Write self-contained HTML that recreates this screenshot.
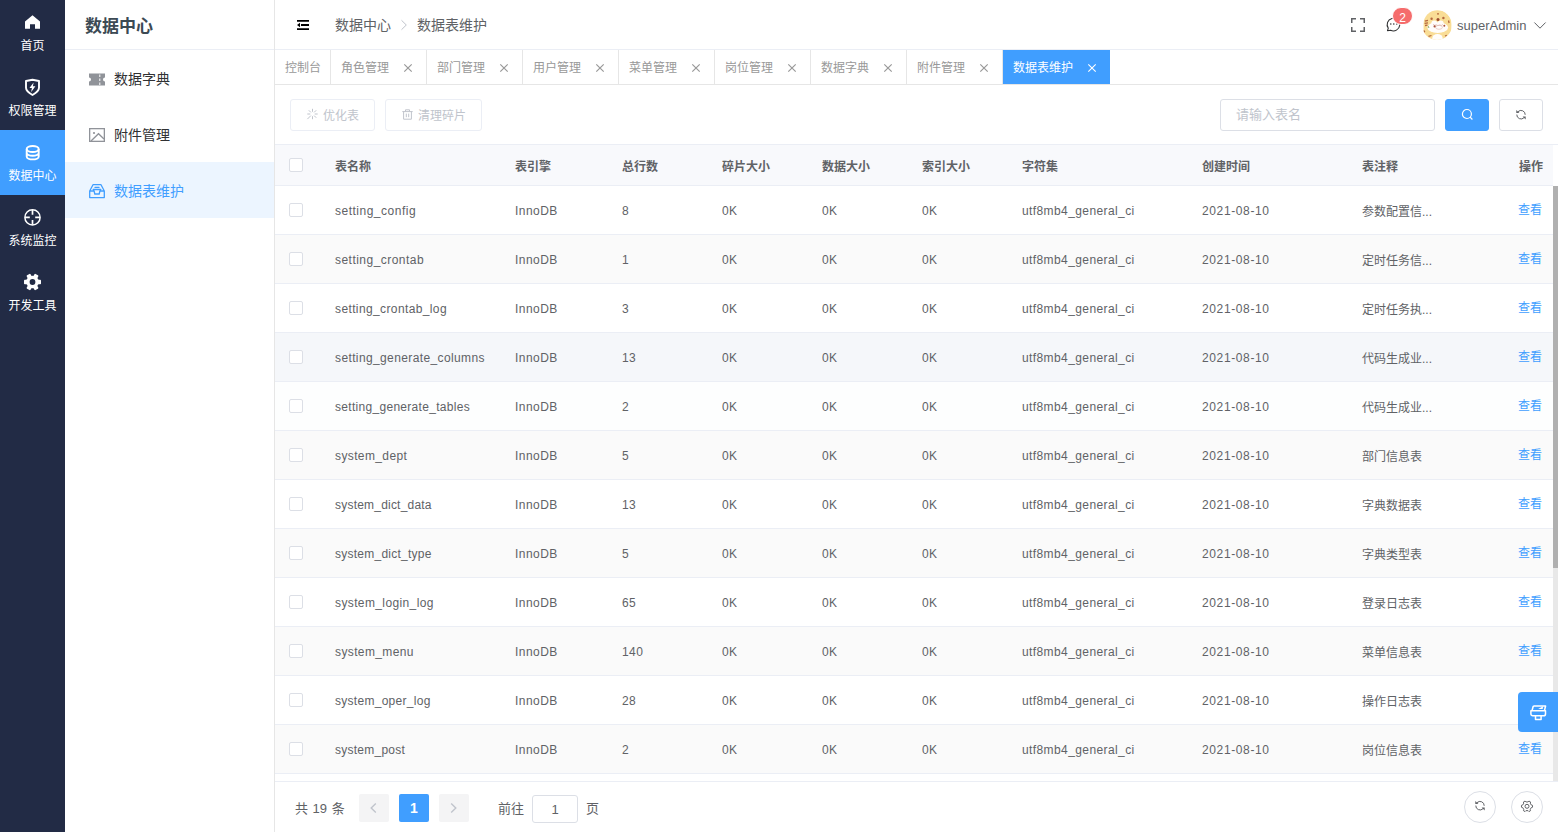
<!DOCTYPE html>
<html lang="zh-CN">
<head>
<meta charset="utf-8">
<title>数据表维护</title>
<style>
*{box-sizing:border-box;margin:0;padding:0}
html,body{width:1558px;height:832px;overflow:hidden;background:#fff}
body{font-family:"Liberation Sans","Noto Sans CJK SC",sans-serif;font-size:12px;color:#606266;position:relative}
ul{list-style:none}
svg{display:block;overflow:visible}
i{font-style:normal}
/* split sidebar */
.split{position:absolute;left:0;top:0;width:65px;height:832px;background:#222b45}
.split li{width:65px;height:65px;color:#fff;text-align:center;position:relative}
.split li.on{background:#409eff}
.split li svg{position:absolute;left:23px;top:13px;width:19px;height:19px}
.split li p{position:absolute;left:0;width:65px;top:36px;line-height:20px;font-size:12px}
/* side */
.side{position:absolute;left:65px;top:0;width:210px;height:832px;border-right:1px solid #e6e6e6;background:#fff}
.side .top{height:50px;line-height:54px;border-bottom:1px solid #ebeef5;padding:0 20px;font-size:17px;font-weight:bold;color:#3c4a54;overflow:hidden}
.side li{height:56px;line-height:58px;padding-left:20px;font-size:14px;color:#303133;position:relative}
.side li.on{background:#ecf5ff;color:#409eff}
.side li svg{position:absolute;left:24px;top:22px;width:16px;height:16px}
.side li span{position:absolute;left:49px;top:0}
/* topbar */
.topbar{position:absolute;left:275px;top:0;width:1283px;height:50px;border-bottom:1px solid #ebeef5;background:#fff}
.topbar span{position:absolute;top:0;line-height:51px;font-size:14px;color:#606266;white-space:nowrap}
.topbar svg{position:absolute}
.badge{position:absolute;left:1117px;top:7px;width:21px;height:18px;border:1px solid #fff;border-radius:9px;background:#f56c6c;color:#fff;font-size:12px;line-height:20px;text-align:center}
/* tags */
.tags{position:absolute;left:275px;top:50px;width:1283px;height:35px;border-bottom:1px solid #e6e6e6;background:#fff}
.tags li{float:left;width:96px;height:34px;border-right:1px solid #e6e6e6;line-height:37px;font-size:12px;color:#999;position:relative;padding-left:10px;white-space:nowrap}
.tags li.on{background:#409eff;color:#fff;border-right-color:#409eff;width:107px}
.tags li svg{position:absolute;right:14px;top:14px;width:8px;height:8px}
.tags li.on svg{right:13px}
/* main */
.main{position:absolute;left:275px;top:85px;width:1283px;height:747px;background:#fff}
.bar{position:absolute;left:0;top:0;width:1283px;height:60px;border-bottom:1px solid #ebeef5}
.btn{position:absolute;top:14px;height:32px;border:1px solid #ebeef5;border-radius:3px;background:#fff;color:#c0c4cc;font-size:12px;line-height:32px;white-space:nowrap}
.btn svg{position:absolute}
.btn span{position:absolute;top:0}
.inp{position:absolute;left:945px;top:14px;width:215px;height:32px;border:1px solid #dcdfe6;border-radius:3px;line-height:30px;padding-left:15px;color:#c0c4cc;font-size:13px}
.tbl{position:absolute;left:0;top:60px;width:1283px;height:636px;overflow:hidden}
.th{position:absolute;left:0;top:0;width:1278px;height:41px;background:#f8f9fc;border-bottom:1px solid #ebeef5;font-weight:bold;color:#606266;line-height:44px}
.tr{position:absolute;left:0;width:1278px;height:49px;border-bottom:1px solid #ebeef5;line-height:50px;background:#fff}
.tr.s{background:#fafafa}
.tr span,.th span{position:absolute;top:0;white-space:nowrap}
.ck{position:absolute;left:14px;top:17px;width:14px;height:14px;border:1px solid #dcdfe6;border-radius:2px;background:#fff}
.th .ck{top:13px}
.c1{left:60px;letter-spacing:.38px}.c2{left:240px;letter-spacing:.45px}.c3{left:347px;letter-spacing:.4px}.c4{left:447px;letter-spacing:.4px}.c5{left:547px;letter-spacing:.4px}.c6{left:647px;letter-spacing:.4px}.c7{left:747px;letter-spacing:.4px}.c8{left:927px;letter-spacing:.62px}.c9{left:1087px}.c10{left:1243px;color:#409eff}
.tr .c9{line-height:52px}
.tr .c10{line-height:49px}
.th span{letter-spacing:0}
.th .c10{left:1244px;color:#606266}
.sb{position:absolute;left:1278px;top:41px;width:5px;height:595px;background:#e8e8e8}
.sb i{position:absolute;left:0;top:0;width:5px;height:382px;background:#b0b0b0}
.foot{position:absolute;left:0;top:696px;width:1283px;height:51px;border-top:1px solid #ebeef5;background:#fff;font-size:13px;color:#606266}
.foot .t{position:absolute;top:12px;line-height:30px;white-space:nowrap}
.pb{position:absolute;top:12px;width:30px;height:28px;border-radius:2px;background:#f4f4f5;color:#c0c4cc;text-align:center;line-height:28px;font-weight:bold}
.pb svg{position:absolute;left:11px;top:9px;width:7px;height:10px}
.pb.on{background:#409eff;color:#fff;font-size:14px}
.pi{position:absolute;left:257px;top:13px;width:46px;height:28px;border:1px solid #dcdfe6;border-radius:3px;text-align:center;line-height:27px;color:#606266}
.cb{position:absolute;top:9px;width:32px;height:32px;border:1px solid #dcdfe6;border-radius:50%;background:#fff}
.cb svg{position:absolute;left:9px;top:8px;width:12px;height:12px}
.fl{position:absolute;left:1243px;top:607px;width:40px;height:40px;background:#409eff;border-radius:4px 0 0 4px}
.fl svg{position:absolute;left:12px;top:13px;width:16px;height:16px}
</style>
</head>
<body>
<div class="split">
<ul>
<li><svg viewBox="0 0 19 19"><path d="M9.500 2.300 2 8.600v7.200h5v-4.500h5v4.500h5V8.600z" fill="#fff"/></svg><p>首页</p></li>
<li><svg viewBox="0 0 19 19"><path d="M9.500 1.800 3 3v6.800c0 2.600 2.400 4.900 6.500 7.200 4.100-2.300 6.500-4.600 6.500-7.200V3z" fill="none" stroke="#fff" stroke-width="1.900" stroke-linejoin="round"/><path d="M10.600 4.400 6.500 10h2.400l-.8 4.200 4.300-5.900H9.900z" fill="#fff"/></svg><p>权限管理</p></li>
<li class="on"><svg viewBox="0 0 19 19"><ellipse cx="9.700" cy="6" rx="6" ry="3" fill="none" stroke="#fff" stroke-width="1.900"/><path d="M3.700 6v7.400c0 1.700 2.700 3 6 3s6-1.300 6-3V6M3.700 9.700c0 1.700 2.700 3 6 3s6-1.300 6-3" fill="none" stroke="#fff" stroke-width="1.900"/></svg><p>数据中心</p></li>
<li><svg viewBox="0 0 19 19"><circle cx="9.500" cy="9.400" r="7.600" fill="none" stroke="#fff" stroke-width="1.500"/><path d="M9.500 2v4.800M9.500 12v4.800M2 9.400h4.800M12.200 9.400H17" stroke="#fff" stroke-width="1.700"/></svg><p>系统监控</p></li>
<li><svg viewBox="0 0 19 19"><g transform="translate(9.500 9)" fill="#fff"><circle r="6.300"/><rect x="-8.500" y="-2.200" width="17" height="4.400" rx=".8"/><rect x="-8.500" y="-2.200" width="17" height="4.400" rx=".8" transform="rotate(60)"/><rect x="-8.500" y="-2.200" width="17" height="4.400" rx=".8" transform="rotate(120)"/><circle r="2.900" fill="#222b45"/></g></svg><p>开发工具</p></li>
</ul>
</div>
<div class="side">
<div class="top">数据中心</div>
<ul>
<li><svg viewBox="0 0 16 16"><path d="M0 1.500h16v4a2 2 0 0 0 0 4v4H0v-4a2 2 0 0 0 0-4z" fill="#909399"/><path d="M10.800 1.500v12" stroke="#fff" stroke-width="1" stroke-dasharray="2.500 1.500" stroke-dashoffset="-1"/></svg><span>数据字典</span></li>
<li><svg viewBox="0 0 16 16"><rect x=".65" y=".65" width="14.700" height="12.700" fill="none" stroke="#909399" stroke-width="1.300"/><path d="M2 13 9.500 5.700 15 11" fill="none" stroke="#909399" stroke-width="1.300"/><circle cx="5" cy="5" r="1.100" fill="#909399"/></svg><span>附件管理</span></li>
<li class="on"><svg viewBox="0 0 16 16"><path d="M.7 7 4 .7h8L15.300 7v6.600H.7zM.7 7h4.400l.7 3h4.400l.7-3h4.400M6 3.400h4M4.200 5.500h7.600" fill="none" stroke="#409eff" stroke-width="1.300" stroke-linejoin="round" stroke-linecap="round"/></svg><span>数据表维护</span></li>
</ul>
</div>
<div class="topbar">
<svg style="left:22px;top:20px;width:12px;height:10px" viewBox="0 0 12 10"><path d="M0 0h12v1.800H0zM4 4.100h8v1.800H4zM0 8.200h12V10H0zM3 2.700v4.600L0 5z" fill="#000"/></svg>
<span style="left:60px">数据中心</span>
<svg style="left:126px;top:20px;width:6px;height:10px" viewBox="0 0 6 10"><path d="M.5.300 5.300 5 .5 9.700" fill="none" stroke="#c0c4cc" stroke-width="1"/></svg>
<span style="left:142px">数据表维护</span>
<svg style="left:1076px;top:18px;width:14px;height:14px" viewBox="0 0 14 14"><path d="M.75 5V.75H5M9 .75h4.250V5M13.250 9v4.250H9M5 13.250H.75V9" fill="none" stroke="#606266" stroke-width="1.500"/></svg>
<svg style="left:1111px;top:17px;width:15px;height:15px" viewBox="0 0 15 15"><path d="M2.300 11.200A6.300 6.300 0 1 1 4.600 13.200L1.500 13.700z" fill="none" stroke="#303133" stroke-width="1.100" stroke-linejoin="round"/><circle cx="4.800" cy="7" r=".8" fill="#303133"/><circle cx="7.800" cy="7" r=".8" fill="#303133"/><circle cx="10.800" cy="7" r=".8" fill="#303133"/></svg>
<div class="badge">2</div>
<svg style="left:1147px;top:10px;width:30px;height:30px" viewBox="0 0 30 30"><defs><clipPath id="av"><circle cx="15" cy="15" r="15"/></clipPath></defs><g clip-path="url(#av)"><rect width="30" height="30" fill="#fff"/><rect x="1.600" y=".2" width="27.800" height="36" rx="13.500" fill="#f9dd96"/><ellipse cx="15.700" cy="17.600" rx="10.400" ry="5.300" fill="#fffdfb"/><circle cx="12.300" cy="13.600" r="3" fill="#fffdfb"/><circle cx="18.700" cy="13.400" r="3" fill="#fffdfb"/><ellipse cx="15.500" cy="28.600" rx="5.300" ry="4.700" fill="#fffdfb"/><path d="M11 14.200q1.200 1.800 3.500.7 1.200 1.400 3.300.1 1.800 1.200 3-.6" fill="none" stroke="#dcb0a6" stroke-width=".7"/><ellipse cx="17" cy="17.300" rx="3.400" ry="2" fill="none" stroke="#e3bdb4" stroke-width=".7"/><circle cx="16" cy="9.400" r="1.500" fill="#9b4a30"/><circle cx="9.600" cy="8.800" r="1.200" fill="#b5683f"/><circle cx="21.400" cy="8" r="1.200" fill="#b5683f"/><circle cx="12.600" cy="16.400" r="1.100" fill="#a9503a"/><circle cx="22.300" cy="15.800" r="1" fill="#a9503a"/><path d="M6.300 15.500l1.300 2.400-2-.4z" fill="#8fae6a"/><path d="M2.800 11.200l3.200-.8M2.600 13.400l3.400-.5M3 15.500l2.500-.3M6.500 26.400l3-.9M23 26l1.800-.6M2 20.500l.8 1.800M26.500 10.500l.6 2.500M15 3.800h2" stroke="#b5683f" stroke-width="1.300"/></g></svg>
<span style="left:1182px;font-size:13px;line-height:51px">superAdmin</span>
<svg style="left:1259px;top:22px;width:12px;height:7px" viewBox="0 0 12 7"><path d="M.4.500 6 6.200 11.600.5" fill="none" stroke="#606266" stroke-width="1"/></svg>
</div>
<div class="tags"><ul>
<li style="width:56px">控制台</li>
<li>角色管理<svg viewBox="0 0 8 8"><path d="M.3.300l7.400 7.400M7.700.3.300 7.700" stroke="#999" stroke-width="1.200"/></svg></li>
<li>部门管理<svg viewBox="0 0 8 8"><path d="M.3.300l7.400 7.400M7.700.3.300 7.700" stroke="#999" stroke-width="1.200"/></svg></li>
<li>用户管理<svg viewBox="0 0 8 8"><path d="M.3.300l7.400 7.400M7.700.3.300 7.700" stroke="#999" stroke-width="1.200"/></svg></li>
<li>菜单管理<svg viewBox="0 0 8 8"><path d="M.3.300l7.400 7.400M7.700.3.300 7.700" stroke="#999" stroke-width="1.200"/></svg></li>
<li>岗位管理<svg viewBox="0 0 8 8"><path d="M.3.300l7.400 7.400M7.700.3.300 7.700" stroke="#999" stroke-width="1.200"/></svg></li>
<li>数据字典<svg viewBox="0 0 8 8"><path d="M.3.300l7.400 7.400M7.700.3.300 7.700" stroke="#999" stroke-width="1.200"/></svg></li>
<li>附件管理<svg viewBox="0 0 8 8"><path d="M.3.300l7.400 7.400M7.700.3.300 7.700" stroke="#999" stroke-width="1.200"/></svg></li>
<li class="on">数据表维护<svg viewBox="0 0 8 8"><path d="M.3.300l7.400 7.400M7.700.3.300 7.700" stroke="#fff" stroke-width="1.100"/></svg></li>
</ul></div>
<div class="main">
<div class="bar">
<div class="btn" style="left:15px;width:85px"><svg style="left:16px;top:8px;width:12px;height:12px" viewBox="0 0 12 12"><path d="M5.500 .8v3M5.500 8.200v3M.3 6h3M7.700 6h3M1.800 2.300 3.900 4.400M7.100 7.600l2.100 2.100M9.200 2.300 7.100 4.400M3.900 7.600.4 11.100" fill="none" stroke="#c0c4cc" stroke-width="1"/></svg><span style="left:32px">优化表</span></div>
<div class="btn" style="left:110px;width:97px"><svg style="left:16px;top:9px;width:12px;height:12px" viewBox="0 0 12 12"><path d="M.3 2.600h10.400M3.500 2.400V.8h4v1.600M1.600 2.600v7.600h7.800V2.600M4.300 4.600v3.600M6.700 4.600v3.600" fill="none" stroke="#c0c4cc" stroke-width="1"/></svg><span style="left:32px">清理碎片</span></div>
<div class="inp">请输入表名</div>
<div class="btn" style="left:1170px;width:44px;background:#409eff;border-color:#409eff"><svg style="left:15px;top:9px;width:12px;height:12px" viewBox="0 0 12 12"><circle cx="5.900" cy="5" r="4.500" fill="none" stroke="#fff" stroke-width="1.200"/><path d="M9.100 8.200 11.400 10.500" stroke="#fff" stroke-width="1.200"/></svg></div>
<div class="btn" style="left:1224px;width:44px;border-color:#dcdfe6"><svg style="left:15px;top:9px;width:12px;height:12px" viewBox="0 0 12 12"><path d="M3 2.700A4.200 4.200 0 0 1 10.200 5.800M9 8.700A4.200 4.200 0 0 1 1.800 5.600" fill="none" stroke="#606266" stroke-width="1"/><path d="M1.300.9 4.400 3.900H1.300zM10.700 10.500 7.600 7.500h3.100z" fill="#606266"/></svg></div>
</div>
<div class="tbl">
<div class="th"><b class="ck"></b><span class="c1">表名称</span><span class="c2">表引擎</span><span class="c3">总行数</span><span class="c4">碎片大小</span><span class="c5">数据大小</span><span class="c6">索引大小</span><span class="c7">字符集</span><span class="c8">创建时间</span><span class="c9">表注释</span><span class="c10">操作</span></div>
<div class="tr" style="top:41px"><b class="ck"></b><span class="c1" style="letter-spacing:0.5px">setting_config</span><span class="c2">InnoDB</span><span class="c3">8</span><span class="c4">0K</span><span class="c5">0K</span><span class="c6">0K</span><span class="c7">utf8mb4_general_ci</span><span class="c8">2021-08-10</span><span class="c9">参数配置信...</span><span class="c10">查看</span></div>
<div class="tr s" style="top:90px"><b class="ck"></b><span class="c1" style="letter-spacing:0.47px">setting_crontab</span><span class="c2">InnoDB</span><span class="c3">1</span><span class="c4">0K</span><span class="c5">0K</span><span class="c6">0K</span><span class="c7">utf8mb4_general_ci</span><span class="c8">2021-08-10</span><span class="c9">定时任务信...</span><span class="c10">查看</span></div>
<div class="tr" style="top:139px"><b class="ck"></b><span class="c1">setting_crontab_log</span><span class="c2">InnoDB</span><span class="c3">3</span><span class="c4">0K</span><span class="c5">0K</span><span class="c6">0K</span><span class="c7">utf8mb4_general_ci</span><span class="c8">2021-08-10</span><span class="c9">定时任务执...</span><span class="c10">查看</span></div>
<div class="tr s" style="top:188px;background:#f5f7fa"><b class="ck"></b><span class="c1">setting_generate_columns</span><span class="c2">InnoDB</span><span class="c3">13</span><span class="c4">0K</span><span class="c5">0K</span><span class="c6">0K</span><span class="c7">utf8mb4_general_ci</span><span class="c8">2021-08-10</span><span class="c9">代码生成业...</span><span class="c10">查看</span></div>
<div class="tr" style="top:237px;background:#fdfefe"><b class="ck"></b><span class="c1" style="letter-spacing:0.3px">setting_generate_tables</span><span class="c2">InnoDB</span><span class="c3">2</span><span class="c4">0K</span><span class="c5">0K</span><span class="c6">0K</span><span class="c7">utf8mb4_general_ci</span><span class="c8">2021-08-10</span><span class="c9">代码生成业...</span><span class="c10">查看</span></div>
<div class="tr s" style="top:286px"><b class="ck"></b><span class="c1">system_dept</span><span class="c2">InnoDB</span><span class="c3">5</span><span class="c4">0K</span><span class="c5">0K</span><span class="c6">0K</span><span class="c7">utf8mb4_general_ci</span><span class="c8">2021-08-10</span><span class="c9">部门信息表</span><span class="c10">查看</span></div>
<div class="tr" style="top:335px"><b class="ck"></b><span class="c1" style="letter-spacing:0.21px">system_dict_data</span><span class="c2">InnoDB</span><span class="c3">13</span><span class="c4">0K</span><span class="c5">0K</span><span class="c6">0K</span><span class="c7">utf8mb4_general_ci</span><span class="c8">2021-08-10</span><span class="c9">字典数据表</span><span class="c10">查看</span></div>
<div class="tr s" style="top:384px"><b class="ck"></b><span class="c1" style="letter-spacing:0.25px">system_dict_type</span><span class="c2">InnoDB</span><span class="c3">5</span><span class="c4">0K</span><span class="c5">0K</span><span class="c6">0K</span><span class="c7">utf8mb4_general_ci</span><span class="c8">2021-08-10</span><span class="c9">字典类型表</span><span class="c10">查看</span></div>
<div class="tr" style="top:433px"><b class="ck"></b><span class="c1">system_login_log</span><span class="c2">InnoDB</span><span class="c3">65</span><span class="c4">0K</span><span class="c5">0K</span><span class="c6">0K</span><span class="c7">utf8mb4_general_ci</span><span class="c8">2021-08-10</span><span class="c9">登录日志表</span><span class="c10">查看</span></div>
<div class="tr s" style="top:482px"><b class="ck"></b><span class="c1">system_menu</span><span class="c2">InnoDB</span><span class="c3">140</span><span class="c4">0K</span><span class="c5">0K</span><span class="c6">0K</span><span class="c7">utf8mb4_general_ci</span><span class="c8">2021-08-10</span><span class="c9">菜单信息表</span><span class="c10">查看</span></div>
<div class="tr" style="top:531px"><b class="ck"></b><span class="c1" style="letter-spacing:0.28px">system_oper_log</span><span class="c2">InnoDB</span><span class="c3">28</span><span class="c4">0K</span><span class="c5">0K</span><span class="c6">0K</span><span class="c7">utf8mb4_general_ci</span><span class="c8">2021-08-10</span><span class="c9">操作日志表</span></div>
<div class="tr s" style="top:580px"><b class="ck"></b><span class="c1" style="letter-spacing:0.25px">system_post</span><span class="c2">InnoDB</span><span class="c3">2</span><span class="c4">0K</span><span class="c5">0K</span><span class="c6">0K</span><span class="c7">utf8mb4_general_ci</span><span class="c8">2021-08-10</span><span class="c9">岗位信息表</span><span class="c10">查看</span></div>
<div class="tr" style="top:629px"><b class="ck"></b><span class="c1">system_role</span><span class="c2">InnoDB</span><span class="c3">3</span><span class="c4">0K</span><span class="c5">0K</span><span class="c6">0K</span><span class="c7">utf8mb4_general_ci</span><span class="c8">2021-08-10</span><span class="c9">角色信息表</span><span class="c10">查看</span></div>
<div class="sb"><i></i></div>
</div>
<div class="fl"><svg viewBox="0 0 16 16"><path d="M3.300 1h12.300l-1.200 4.700M3.300 1 2 5.700" fill="none" stroke="#fff" stroke-width="1.500" stroke-linejoin="round"/><path d="M.9 5.700h14.600v3.200a1.900 1.900 0 0 1-1.900 1.900H2.800A1.900 1.900 0 0 1 .9 8.900zM5.500 10.800v3.600h5.600v-3.600" fill="none" stroke="#fff" stroke-width="1.500" stroke-linejoin="round"/><path d="M8.200 4 13 1.200l-.3 2.800z" fill="#fff"/></svg></div>
<div class="foot">
<span class="t" style="left:20px;word-spacing:1px">共 19 条</span>
<div class="pb" style="left:84px"><svg viewBox="0 0 7 10"><path d="M5.800.5 1.200 5l4.600 4.500" fill="none" stroke="#c0c4cc" stroke-width="1.400"/></svg></div>
<div class="pb on" style="left:124px">1</div>
<div class="pb" style="left:164px"><svg viewBox="0 0 7 10"><path d="M1.200.5 5.800 5 1.200 9.500" fill="none" stroke="#c0c4cc" stroke-width="1.400"/></svg></div>
<span class="t" style="left:223px">前往</span>
<div class="pi">1</div>
<span class="t" style="left:311px">页</span>
<div class="cb" style="left:1189px"><svg viewBox="0 0 12 12"><path d="M3 2.700A4.200 4.200 0 0 1 10.200 5.800M9 8.700A4.200 4.200 0 0 1 1.800 5.600" fill="none" stroke="#606266" stroke-width="1"/><path d="M1.300.9 4.400 3.900H1.300zM10.700 10.500 7.600 7.500h3.100z" fill="#606266"/></svg></div>
<div class="cb" style="left:1236px"><svg viewBox="0 0 12 12"><path d="M10.33 5.06 L11.52 5.37 L11.52 7.23 L10.33 7.54 L9.24 9.43 L9.57 10.61 L7.95 11.55 L7.09 10.67 L4.91 10.67 L4.05 11.55 L2.43 10.61 L2.76 9.43 L1.67 7.54 L0.48 7.23 L0.48 5.37 L1.67 5.06 L2.76 3.17 L2.43 1.99 L4.05 1.05 L4.91 1.93 L7.09 1.93 L7.95 1.05 L9.57 1.99 L9.24 3.17Z" fill="none" stroke="#606266" stroke-width="1" stroke-linejoin="round"/><circle cx="6" cy="6.300" r="2" fill="none" stroke="#606266" stroke-width="1"/></svg></div>
</div>
</div>
</body>
</html>
